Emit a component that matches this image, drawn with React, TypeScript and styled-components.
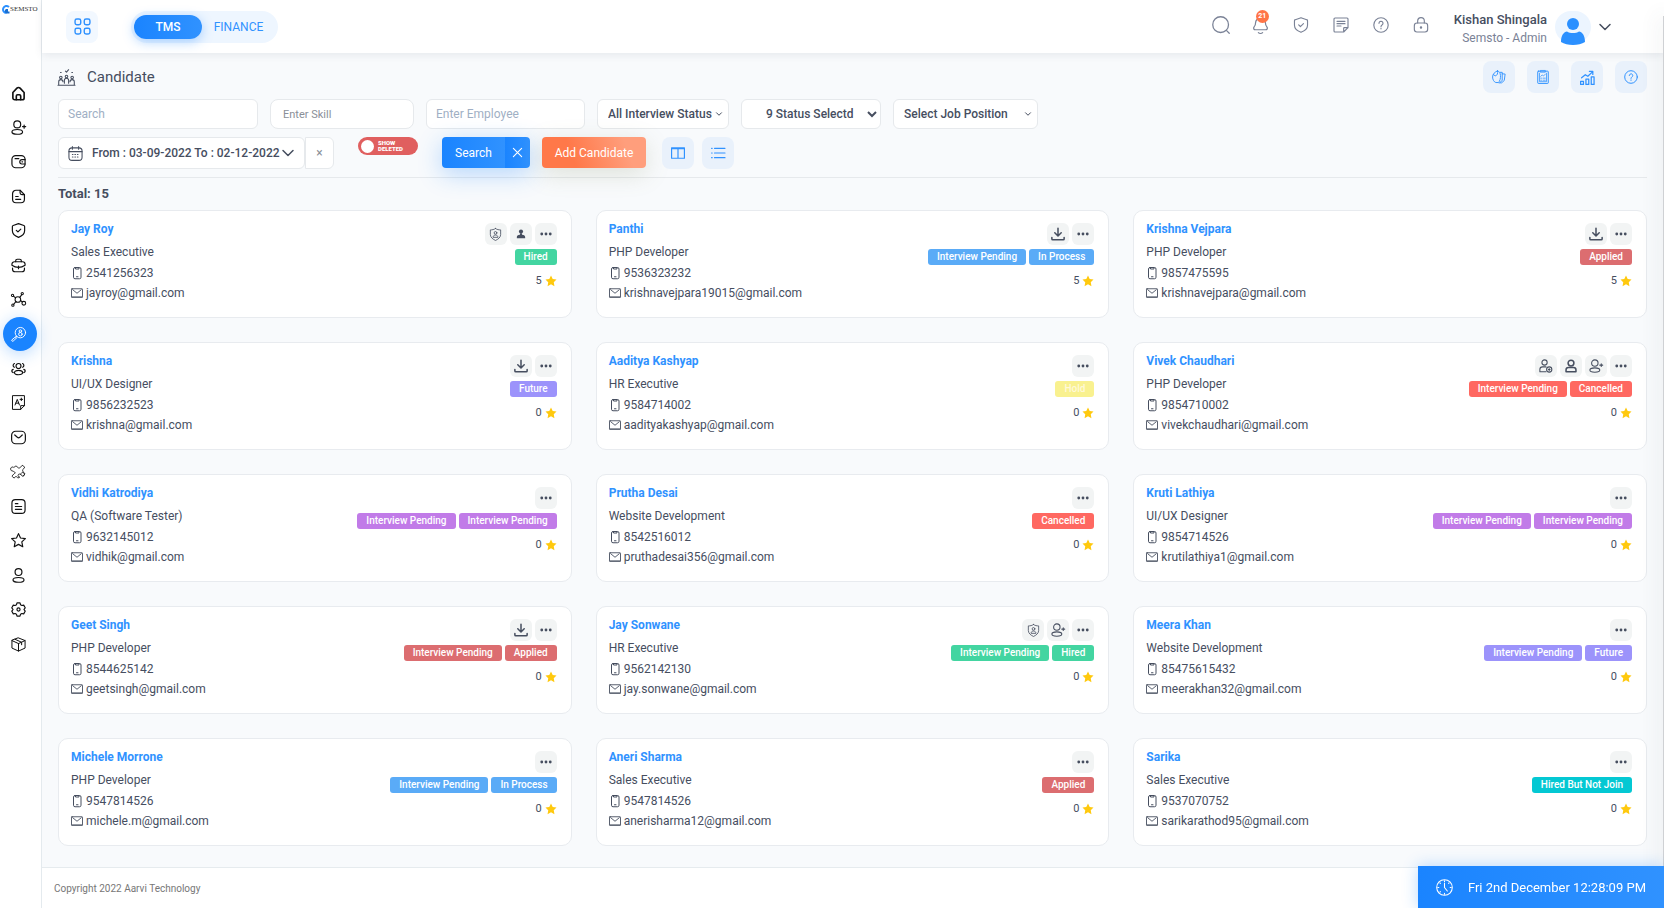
import React from "react";
import styled, { createGlobalStyle } from "styled-components";

const GlobalStyle = createGlobalStyle`
  *, *::before, *::after { box-sizing: border-box; }
  body {
    margin: 0;
    background: #f8fafc;
    color: #464e5f;
    font-family: Roboto, "Liberation Sans", sans-serif;
    font-size: 12px;
  }
  button, input, select { font-family: inherit; margin: 0; }
  button { cursor: pointer; }
  h1, h2, p, ul, dl, dd { margin: 0; padding: 0; }
  svg { display: block; flex: none; }
`;

/* ---------- icons ---------- */

const shapes: Record<string, React.ReactNode> = {
  home: (
    <>
      <path d="M3 10.5 9.5 3.4a3.4 3.4 0 0 1 5 0L21 10.5V19a3 3 0 0 1-3 3H6a3 3 0 0 1-3-3z" />
      <path d="M8.500 22v-6a2 2 0 0 1 2-2h3a2 2 0 0 1 2 2v6" />
    </>
  ),
  userPlus: (
    <>
      <circle cx="10" cy="7" r="5.500" />
      <ellipse cx="10" cy="19" rx="8.500" ry="3.800" />
      <path d="M21 8v5M18.500 10.500h5" />
    </>
  ),
  wallet: (
    <>
      <rect x="1.500" y="2.500" width="21" height="19.500" rx="6" />
      <path d="M22.500 9h-5a3.500 3.500 0 0 0 0 7h5M17.500 12.500h1M6.500 7.500h6" />
    </>
  ),
  file: (
    <>
      <path d="M14.500 2H8a5.500 5.500 0 0 0-5.500 5.500v9A5.500 5.500 0 0 0 8 22h8a5.500 5.500 0 0 0 5.500-5.500V9z" />
      <path d="M14.500 2v4a3 3 0 0 0 3 3h4M7.500 12h4M7.500 16.500h8" />
    </>
  ),
  shieldCheck: (
    <>
      <path d="M12 1 20.500 4a1.800 1.800 0 0 1 1.300 1.700v6.800c0 5-4.300 8.500-9.800 10.500-5.500-2-9.800-5.500-9.800-10.500V5.700A1.800 1.800 0 0 1 3.500 4z" />
      <path d="m8.500 11.800 2.600 2.500 4.600-4.500" />
    </>
  ),
  briefcase: (
    <>
      <path d="M7.500 6V4.500A2.500 2.500 0 0 1 10 2h4a2.500 2.500 0 0 1 2.500 2.500V6" />
      <path d="M1.500 11.500V10A4 4 0 0 1 5.500 6h13a4 4 0 0 1 4 4v1.500C19 14 15.500 15 12 15S5 14 1.500 11.500zM2.500 16v2.500a4 4 0 0 0 4 3.500h11a4 4 0 0 0 4-3.500V16M12 13v4" />
    </>
  ),
  network: (
    <>
      <circle cx="11" cy="12" r="4.500" />
      <circle cx="2.500" cy="5.500" r="1.800" />
      <circle cx="18" cy="2.500" r="1.800" />
      <circle cx="3" cy="21" r="1.800" />
      <circle cx="20.500" cy="18" r="3" />
      <path d="m4 6.500 3.300 3M17 4.500l-3 4M4.500 19.500l3.300-4M15.300 13.500l2.700 2.500" />
    </>
  ),
  candidateSearch: (
    <>
      <circle cx="15" cy="9" r="8.300" />
      <circle cx="15" cy="6.500" r="2" />
      <circle cx="15" cy="11.500" r="2.800" />
      <path d="M9 15l-1.500 1.700M7.500 15.500 1.500 20.500c-1 1.500.5 3 2 2l6-5.500" />
    </>
  ),
  users: (
    <>
      <circle cx="12" cy="8" r="4" />
      <ellipse cx="12" cy="18.500" rx="6.500" ry="3.500" />
      <path d="M5.500 4a3.200 3.200 0 0 0 0 6M18.500 4a3.200 3.200 0 0 1 0 6M3.500 13.500c-3 1-3 4 0 5M20.500 13.500c3 1 3 4 0 5" />
    </>
  ),
  grade: (
    <>
      <path d="M3 1h18.500v16L15.500 23H3z" />
      <path d="M21.500 17h-6v6M6.500 16 10 7l3.500 9M7.800 13h4.500M16.500 5v4M14.500 7h4" />
    </>
  ),
  mailRound: (
    <>
      <rect x="1" y="2" width="22" height="20" rx="6.500" />
      <path d="m6 8 4.200 3.700a3 3 0 0 0 3.800 0L18 8" />
    </>
  ),
  puzzle: (
    <path
      strokeDasharray="2.500 1"
      d="M4.500 5.500 8 3l3 2.500a2.500 2.500 0 0 0 4 0L18 2l4 3-2.500 3.500a2.500 2.500 0 0 0 0 4L22.500 16 19 19.500l-3-2a2.500 2.500 0 1 0-2 3.500l-3 1.500-3-3-3 3-3.500-3 3-3.500 2.500-2-3.500-2.500-3-1A2.500 2.500 0 1 1 4.500 5.500zM15.500 16.500a3 3 0 1 1 4 3"
    />
  ),
  note: (
    <>
      <rect x="1.500" y="1" width="21" height="22" rx="5.500" />
      <path d="M7 7.500h4M7 12h10M7 16.500h10" />
    </>
  ),
  star: <path d="m12 1 3.200 7 7.800 1-5.700 5.300 1.500 7.700-6.800-3.800L5.200 22l1.500-7.700L1 9l7.800-1z" />,
  user: (
    <>
      <circle cx="12" cy="6.500" r="5.500" />
      <ellipse cx="12" cy="19" rx="8.800" ry="3.800" />
    </>
  ),
  gear: (
    <>
      <path d="M9.600 1.500h4.800l.9 3 2 1.100 3-.6 2.400 4.300-2 2.700 2 2.700-2.400 4.300-3-.6-2 1.100-.9 3H9.600l-.9-3-2-1.100-3 .6-2.400-4.300 2-2.700-2-2.700L3.700 5l3 .6 2-1.100z" />
      <circle cx="12" cy="12" r="2.500" />
    </>
  ),
  box: (
    <>
      <path d="m12 1.500 10.500 4.200v12L12 22.500 1.500 17.700v-12zM1.500 5.700 12 10.500l10.500-4.800M12 10.500v12" />
      <path d="m6.500 3.700 10.500 4.700v4" />
    </>
  ),
  grid: (
    <>
      <rect x="1.500" y="1.500" width="8" height="8" rx="2.500" />
      <rect x="14.500" y="1.500" width="8" height="8" rx="2.500" />
      <rect x="1.500" y="14.500" width="8" height="8" rx="2.500" />
      <rect x="14.500" y="14.500" width="8" height="8" rx="2.500" />
    </>
  ),
  search: (
    <>
      <circle cx="11.500" cy="11.500" r="10.500" />
      <path d="m19.500 19.500 3.500 3.500" />
    </>
  ),
  bell: (
    <path d="M5 8.500a7 7 0 0 1 14 0c0 3 .5 4 2 5.500 1.500 2 .5 4-2 4H5c-2.500 0-3.500-2-2-4 1.500-1.500 2-2.500 2-5.500zM9 22c1.500 1.700 4.500 1.700 6 0" />
  ),
  memo: (
    <>
      <path d="M3 1.500h18a1.500 1.500 0 0 1 1.500 1.500v13L16 22.500H3A1.500 1.500 0 0 1 1.500 21V3A1.500 1.500 0 0 1 3 1.500zM22.500 16H17a1 1 0 0 0-1 1v5.500" />
      <path d="M6 6.500h12M6 10h12M6 13.500h6" />
    </>
  ),
  help: (
    <>
      <circle cx="12" cy="12" r="10.800" />
      <path d="M9 9.500a3 3 0 1 1 4.500 2.600c-1 .6-1.500 1.100-1.500 2.400M12 17v.8" />
    </>
  ),
  lock: (
    <>
      <rect x="2" y="9" width="20" height="13.500" rx="4" />
      <path d="M7 9V6a5 5 0 0 1 10 0v3" />
      <circle cx="12" cy="15.800" r="1" />
    </>
  ),
  team: (
    <>
      <path d="M1 22v-4a3 3 0 0 1 6 0M9 20v-4a3 3 0 0 1 6 0v4M17 18a3 3 0 0 1 6 0v4M0 23h24" />
      <circle cx="4" cy="12" r="1.800" />
      <circle cx="12" cy="10.500" r="1.800" />
      <circle cx="20" cy="12" r="1.800" />
      <path d="m10.500 3 1.500 1.500L15 1M3.500 5h1M19.500 5h1" />
    </>
  ),
  cards: (
    <>
      <path d="M9.500 1.500C5 3 1 7 1 12c0 4.500 2.500 8.500 5.500 9.500H11c2.500-2 4-8 3.500-12-.3-4-1.500-7.500-5-8z" />
      <path d="M9.500 1.500C10.500 6 9 9.500 5.500 10L2.500 8M14 4h3.500v14L14 21M17.500 6.500l5 .5-1.500 11-4.500 4H12" />
    </>
  ),
  clipboard: (
    <>
      <rect x="3" y="2" width="18" height="21" rx="1" />
      <path strokeWidth="1.300" d="M8 .8h8v3H8zM6 5.500V20h12V5.500M8 11l2.500-2.500 2 1.500L16 7.500M8 14h1.500M12 14h4M8 17.500h1.500M12 17.500h4" />
    </>
  ),
  growth: (
    <path d="M1 18h4.500v5H1zM9.500 14.500H14V23H9.500zM18 11h4.500v12H18zM2.500 12.500l6-5 4 2.500L20 3M15 2h5.500v5" />
  ),
  columns: <path d="M1 3h22v18H1zM12 3v18M1 4.500h22" />,
  list: <path d="M1 4h1M6 4h18M1 12h1M6 12h18M1 20h1M6 20h18" />,
  calendar: (
    <>
      <rect x="1.500" y="3" width="21" height="20" rx="5" />
      <path d="M7 1v4M17 1v4M1.500 9h21" />
      <path strokeDasharray="1 3" d="M7 13.500h11M7 17.500h11" />
    </>
  ),
  chevron: <path d="m2 7 10 10L22 7" />,
  cross: <path d="m3 3 18 18M21 3 3 21" />,
  phone: (
    <>
      <rect x="5" y="1" width="15" height="22.500" rx="3" />
      <path d="M9 2v2h7V2M11 19.500h3" />
    </>
  ),
  mail: (
    <>
      <rect x="1" y="3.500" width="22" height="17" rx="1" />
      <path d="m3.500 5.500 8.500 7 8.500-7M1 20h22" />
    </>
  ),
  shieldUser: (
    <>
      <path d="M12 1c3 2 6 2.500 9.500 2.500V12c0 5-4 8.500-9.500 11-5.500-2.500-9.500-6-9.500-11V3.500C6 3.500 9 3 12 1z" />
      <circle cx="12" cy="9" r="2.500" />
      <path d="M7.500 16.500c0-5 9-5 9 0z" />
    </>
  ),
  userLine: (
    <>
      <circle cx="12" cy="7" r="5" />
      <path d="M3.500 22v-3.500c0-3 2-4 4-4h9c2 0 4 1 4 4V22z" />
    </>
  ),
  userGear: (
    <>
      <circle cx="9.500" cy="6" r="4.500" />
      <path d="M12 22H1.500v-4c0-3 2-4.500 4.500-4.500h6" />
      <circle cx="17.500" cy="18" r="4.500" />
      <path d="M16 18h3M17.500 16.500v3" />
    </>
  ),
  download: <path d="M12 2v13M6.500 10l5.500 5.500 5.500-5.500M1.500 18v2.500a1.500 1.500 0 0 0 1.500 1.500h18a1.500 1.500 0 0 0 1.500-1.500V18" />,
  clock: (
    <>
      <circle cx="12" cy="12" r="11" />
      <path d="M12 6v6l4 5M12 2.500v1.500M12 20v1.500M2.500 12H4M20 12h1.500M5.500 5.500l.7.7M18.500 5.500l-.7.7M5.500 18.500l.7-.7" />
    </>
  ),
};

const filled: Record<string, React.ReactNode> = {
  userSolid: (
    <>
      <circle cx="12" cy="6" r="5" />
      <path d="M9.500 10h5v4c5.500.5 7.500 2.500 7.500 6v2H2v-2c0-3.500 2-5.500 7.500-6z" />
    </>
  ),
  dots: (
    <>
      <circle cx="3.500" cy="12" r="2.800" />
      <circle cx="12" cy="12" r="2.800" />
      <circle cx="20.500" cy="12" r="2.800" />
    </>
  ),
  starSolid: <path d="m12 1 3.400 7.200 7.600 1-5.500 5.300 1.400 7.800L12 18.500l-6.900 3.800 1.400-7.800L1 9.200l7.600-1z" />,
  avatar: (
    <>
      <circle cx="12" cy="5" r="6" />
      <path d="M0 23c0-7 3-10 6-10.500 3 2 9 2 12 0 3 .5 6 3.500 6 10.500-6 4-18 4-24 0z" />
    </>
  ),
};

function Icon({ name, size = 16, weight = 2 }: { name: string; size?: number; weight?: number }) {
  const solid = name in filled;
  return (
    <svg
      width={size}
      height={size}
      viewBox="0 0 24 24"
      overflow="visible"
      fill={solid ? "currentColor" : "none"}
      stroke={solid ? "none" : "currentColor"}
      strokeWidth={weight}
      strokeLinecap="round"
      strokeLinejoin="round"
      aria-hidden="true"
    >
      {solid ? filled[name] : shapes[name]}
    </svg>
  );
}

/* ---------- shell ---------- */

const Shell = styled.div`
  display: flex;
  min-height: 100vh;
`;

const Sidebar = styled.aside`
  flex: none;
  width: 42px;
  background: #fff;
  border-right: 1px solid #e4eaee;
`;

const Logo = styled.a`
  display: flex;
  align-items: center;
  height: 16px;
  padding: 2px 0 0 2px;
  margin-bottom: 60px;
  color: #333;
  font-family: "Liberation Serif", serif;
  font-size: 7px;
  line-height: 10px;
  text-decoration: none;
`;

const SideNav = styled.nav`
  display: flex;
  flex-direction: column;
  justify-content: space-between;
  height: 585px;
  padding-left: 3px;
`;

const SideLink = styled.a<{ $active?: boolean }>`
  display: flex;
  align-items: center;
  width: 34px;
  height: 34px;
  padding-left: 8px;
  border-radius: 50%;
  color: ${(p) => (p.$active ? "#fff" : "#111")};
  background: ${(p) => (p.$active ? "#1a84ff" : "transparent")};
  box-shadow: ${(p) => (p.$active ? "0 3px 16px rgba(26, 132, 255, 0.3)" : "none")};
`;

const Page = styled.div`
  display: flex;
  flex: 1;
  flex-direction: column;
  min-width: 0;
`;

const Header = styled.header`
  display: flex;
  align-items: center;
  height: 53px;
  padding: 0 53px 0 24px;
  background: #fff;
  box-shadow: 0 2px 8px rgba(70, 78, 95, 0.1);
`;

const SquareButton = styled.button<{ $tone?: string }>`
  display: flex;
  align-items: center;
  justify-content: center;
  width: 32px;
  height: 32px;
  padding: 0;
  border: 0;
  border-radius: 8px;
  background: ${(p) => p.$tone ?? "#e9f1fb"};
  color: #3092ff;
`;

const ModeSwitch = styled.div`
  display: flex;
  align-items: center;
  height: 32px;
  margin-left: 33px;
  padding: 0 3px;
  border-radius: 16px;
  background: #eef6ff;
`;

const ModeButton = styled.button<{ $active?: boolean }>`
  height: 24px;
  width: ${(p) => (p.$active ? "68px" : "73px")};
  padding: 0;
  border: 0;
  border-radius: 12px;
  font-size: 12px;
  font-weight: ${(p) => (p.$active ? 500 : 400)};
  color: ${(p) => (p.$active ? "#fff" : "#3092ff")};
  background: ${(p) => (p.$active ? "linear-gradient(90deg, #1a84ff, #3092ff)" : "transparent")};
  box-shadow: ${(p) => (p.$active ? "0 3px 12px rgba(26, 132, 255, 0.35)" : "none")};
`;

const HeaderTools = styled.div`
  display: flex;
  gap: 22px;
  margin-left: auto;
  padding-bottom: 3px;
`;

const ToolButton = styled.button`
  position: relative;
  display: flex;
  align-items: center;
  justify-content: center;
  width: 18px;
  height: 18px;
  padding: 0;
  border: 0;
  background: none;
  color: #7a8296;
`;

const Badge = styled.span`
  position: absolute;
  top: -6px;
  left: 4px;
  width: 13px;
  height: 13px;
  border-radius: 50%;
  background: #ff7547;
  color: #fff;
  font-size: 7px;
  font-weight: 700;
  line-height: 13px;
`;

const Account = styled.button`
  display: flex;
  align-items: center;
  margin-left: 24px;
  padding: 0;
  border: 0;
  background: none;
  color: #464e5f;
  text-align: right;
`;

const AccountText = styled.span`
  display: flex;
  flex-direction: column;
  padding-top: 4px;
  font-size: 12px;
  line-height: 19px;
  color: #7a8296;
`;

const AccountName = styled.strong`
  font-size: 13px;
  font-weight: 500;
  color: #464e5f;
`;

const Avatar = styled.span`
  display: flex;
  align-items: flex-end;
  justify-content: center;
  width: 36px;
  height: 32px;
  margin: 0 8px;
  border-radius: 18px;
  background: #ecf5ff;
  color: #2b90ff;
`;

/* ---------- filters ---------- */

const Main = styled.main`
  flex: 1;
  padding: 8px 17px 21px 16px;
`;

const TitleBar = styled.div`
  display: flex;
  align-items: center;
  gap: 12px;
  height: 32px;
  margin-bottom: 6px;
`;

const Title = styled.h1`
  margin-right: auto;
  font-size: 15px;
  font-weight: 400;
`;

const Filters = styled.form`
  padding-bottom: 8px;
  border-bottom: 1px solid #e6e9ec;
`;

const FilterRow = styled.div`
  display: flex;
  flex-wrap: wrap;
  gap: 12px;
  & + & { margin-top: 8px; gap: 0; }
`;

const Field = styled.input<{ $width: number; $soft?: boolean }>`
  width: ${(p) => p.$width}px;
  height: 30px;
  padding: ${(p) => (p.$soft ? "0 12px" : "0 9px")};
  border: 1px solid #e6e9ec;
  border-radius: ${(p) => (p.$soft ? 8 : 6)}px;
  background: #fff;
  font-size: ${(p) => (p.$soft ? 11 : 12)}px;
  &::placeholder { color: ${(p) => (p.$soft ? "#8a8f98" : "#9fafc4")}; opacity: 1; }
`;

const PickerBox = styled.span<{ $width: number }>`
  display: grid;
  grid-template-columns: 1fr 12px;
  align-items: center;
  width: ${(p) => p.$width}px;
  height: 30px;
  border: 1px solid #e6e9ec;
  border-radius: 6px;
  background: #fff;
  color: #464e5f;
`;

const PlainPicker = styled.select`
  appearance: none;
  grid-area: 1 / 1 / 2 / 3;
  height: 28px;
  padding: 0 12px 0 10px;
  border: 0;
  background: none;
  color: #464e5f;
  font-size: 12px;
  font-weight: 500;
`;

const PickerMark = styled.span`
  grid-area: 1 / 2 / 2 / 3;
  pointer-events: none;
`;

const StatusPicker = styled.select`
  width: 140px;
  height: 30px;
  padding: 0 0 0 20px;
  border: 1px solid #e6e9ec;
  border-radius: 6px;
  background: #fff;
  color: #464e5f;
  font-size: 12px;
  font-weight: 500;
`;

const DateButton = styled.button`
  display: flex;
  align-items: center;
  width: 247px;
  height: 32px;
  padding: 0 10px 0 9px;
  border: 1px solid #e6e9ec;
  border-radius: 6px;
  background: #fff;
  color: #464e5f;
  font-size: 12px;
  font-weight: 500;
`;

const DateText = styled.span`
  margin: 0 auto 0 9px;
`;

const ClearDate = styled.button`
  width: 29px;
  height: 32px;
  padding: 0;
  border: 1px solid #e6e9ec;
  border-radius: 0 6px 6px 0;
  background: #fff;
  color: #8a8f98;
  font-size: 12px;
`;

const DeletedToggle = styled.label`
  display: flex;
  align-items: center;
  gap: 4px;
  width: 60px;
  height: 18px;
  margin: 0 24px;
  padding-left: 3px;
  border-radius: 9px;
  background: #e05f5f;
  color: #fff;
  font-size: 6px;
  font-weight: 900;
  line-height: 6px;
  cursor: pointer;
`;

const ToggleInput = styled.input`
  appearance: none;
  flex: none;
  width: 13px;
  height: 13px;
  border-radius: 50%;
  background: #fff;
`;

const SearchGroup = styled.div`
  display: flex;
  height: 31px;
  margin-right: 12px;
  border-radius: 4px;
  box-shadow: 0 6px 24px rgba(26, 132, 255, 0.3);
`;

const SearchButton = styled.button`
  width: 63px;
  padding: 0;
  border: 0;
  border-radius: 4px 0 0 4px;
  background: linear-gradient(90deg, #1a84ff, #3092ff);
  color: #fff;
  font-size: 12px;
`;

const ResetButton = styled.button`
  display: flex;
  align-items: center;
  justify-content: center;
  width: 25px;
  padding: 0;
  border: 0;
  border-radius: 0 4px 4px 0;
  background: linear-gradient(90deg, #1a84ff, #3092ff);
  color: #fff;
`;

const AddButton = styled.button`
  width: 104px;
  height: 31px;
  margin-right: 16px;
  padding: 0;
  border: 0;
  border-radius: 4px;
  background: linear-gradient(70deg, #ff7849 30%, #ff9e7c 80%);
  box-shadow: 0 6px 24px rgba(120, 130, 80, 0.2);
  color: #fff;
  font-size: 12px;
`;

const ViewButtons = styled.div`
  display: flex;
  gap: 8px;
`;

/* ---------- candidate cards ---------- */

const Total = styled.p`
  margin: 7px 0;
  font-size: 13px;
  font-weight: 700;
  line-height: 18px;
`;

const Cards = styled.div`
  display: grid;
  grid-template-columns: repeat(3, minmax(0, 1fr));
  gap: 24px;
`;

const Card = styled.article`
  display: flex;
  justify-content: space-between;
  min-height: 108px;
  padding: 9px 14px 8px 12px;
  border: 1px solid #e8ebef;
  border-radius: 10px;
  background: #fff;
`;

const Details = styled.div`
  min-width: 0;
  line-height: 20px;
`;

const Name = styled.a`
  display: block;
  margin-bottom: 4px;
  line-height: 18px;
  font-weight: 700;
  color: #3092ff;
  text-decoration: none;
`;

const Role = styled.p`
  margin-bottom: 1px;
`;

const Contact = styled.p`
  display: flex;
  align-items: center;
  gap: 3px;
`;

const Side = styled.div`
  display: flex;
  flex-direction: column;
  align-items: flex-end;
  padding-top: 3px;
`;

const Row = styled.div`
  display: flex;
  gap: 3px;
`;

const Action = styled.button`
  display: flex;
  align-items: center;
  justify-content: center;
  width: 22px;
  height: 22px;
  padding: 0;
  border: 0;
  border-radius: 6px;
  background: #f2f4f4;
  color: #464e5f;
`;

const Tags = styled(Row)`
  margin: 4px 0 8px;
`;

const Tag = styled.span<{ $color: string; $ink?: string }>`
  padding: 0 9px;
  border-radius: 3px;
  background: ${(p) => p.$color};
  color: ${(p) => p.$ink ?? "#fff"};
  font-size: 10px;
  font-weight: 500;
  line-height: 16px;
  white-space: nowrap;
`;

const Rating = styled.div`
  display: flex;
  align-items: center;
  gap: 3px;
  font-size: 11px;
  line-height: 16px;
`;

const StarMark = styled.span`
  color: #ffc90e;
`;

/* ---------- footer ---------- */

const Footer = styled.footer`
  display: flex;
  align-items: center;
  justify-content: space-between;
  height: 41px;
  padding-left: 12px;
  border-top: 1px solid #e6ebee;
  background: #fff;
  color: #777;
  font-size: 10px;
`;

const ClockBar = styled.div`
  position: relative;
  z-index: 2;
  display: flex;
  align-items: center;
  gap: 15px;
  height: 42px;
  margin-top: -2px;
  padding: 0 18px;
  background: linear-gradient(90deg, #1a84ff, #3092ff);
  box-shadow: 0 0 16px rgba(26, 132, 255, 0.3);
  color: #fff;
  font-size: 13px;
`;

const EdgePanel = styled.div`
  position: fixed;
  z-index: 1;
  top: 16px;
  right: 0;
  bottom: 28px;
  width: 1px;
  background: #cfd1d4;
  box-shadow: 0 0 20px 2px rgba(70, 78, 95, 0.16);
`;

/* ---------- data ---------- */

const sideItems: [string, string, number?][] = [
  ["home", "Home", 2.6],
  ["userPlus", "Add user"],
  ["wallet", "Wallet"],
  ["file", "Documents"],
  ["shieldCheck", "Security"],
  ["briefcase", "Jobs"],
  ["network", "Network", 1.7],
  ["candidateSearch", "Candidates", 1.5],
  ["users", "Teams"],
  ["grade", "Grades", 1.6],
  ["mailRound", "Mail"],
  ["puzzle", "Extensions", 1.3],
  ["note", "Notes"],
  ["star", "Favourites"],
  ["user", "Profile"],
  ["gear", "Settings"],
  ["box", "Assets", 1.6],
];

const tools: [string, string, number][] = [
  ["search", "Search", 18],
  ["bell", "Notifications", 17],
  ["shieldCheck", "Security", 16],
  ["memo", "Notes", 16],
  ["help", "Help", 16],
  ["lock", "Lock", 16],
];

const BLUE = "#5aabf7";
const RED = "#dc6d70";
const CORAL = "#ff6861";
const GREEN = "#43d5a1";
const LILAC = "#9c93fb";
const PURPLE = "#c17be8";
const CYAN = "#04c8d3";
const YELLOW = "#f9f18f";

interface Candidate {
  name: string;
  role: string;
  phone: string;
  email: string;
  actions?: string[];
  tags: string[];
  color: string;
  rating?: number;
}

const candidates: Candidate[] = [
  { name: "Jay Roy", role: "Sales Executive", phone: "2541256323", email: "jayroy@gmail.com", actions: ["shieldUser", "userSolid"], tags: ["Hired"], color: GREEN, rating: 5 },
  { name: "Panthi", role: "PHP Developer", phone: "9536323232", email: "krishnavejpara19015@gmail.com", actions: ["download"], tags: ["Interview Pending", "In Process"], color: BLUE, rating: 5 },
  { name: "Krishna Vejpara", role: "PHP Developer", phone: "9857475595", email: "krishnavejpara@gmail.com", actions: ["download"], tags: ["Applied"], color: RED, rating: 5 },
  { name: "Krishna", role: "UI/UX Designer", phone: "9856232523", email: "krishna@gmail.com", actions: ["download"], tags: ["Future"], color: LILAC },
  { name: "Aaditya Kashyap", role: "HR Executive", phone: "9584714002", email: "aadityakashyap@gmail.com", tags: ["Hold"], color: YELLOW },
  { name: "Vivek Chaudhari", role: "PHP Developer", phone: "9854710002", email: "vivekchaudhari@gmail.com", actions: ["userGear", "userLine", "userPlus"], tags: ["Interview Pending", "Cancelled"], color: CORAL },
  { name: "Vidhi Katrodiya", role: "QA (Software Tester)", phone: "9632145012", email: "vidhik@gmail.com", tags: ["Interview Pending", "Interview Pending"], color: PURPLE },
  { name: "Prutha Desai", role: "Website Development", phone: "8542516012", email: "pruthadesai356@gmail.com", tags: ["Cancelled"], color: CORAL },
  { name: "Kruti Lathiya", role: "UI/UX Designer", phone: "9854714526", email: "krutilathiya1@gmail.com", tags: ["Interview Pending", "Interview Pending"], color: PURPLE },
  { name: "Geet Singh", role: "PHP Developer", phone: "8544625142", email: "geetsingh@gmail.com", actions: ["download"], tags: ["Interview Pending", "Applied"], color: RED },
  { name: "Jay Sonwane", role: "HR Executive", phone: "9562142130", email: "jay.sonwane@gmail.com", actions: ["shieldUser", "userPlus"], tags: ["Interview Pending", "Hired"], color: GREEN },
  { name: "Meera Khan", role: "Website Development", phone: "85475615432", email: "meerakhan32@gmail.com", tags: ["Interview Pending", "Future"], color: LILAC },
  { name: "Michele Morrone", role: "PHP Developer", phone: "9547814526", email: "michele.m@gmail.com", tags: ["Interview Pending", "In Process"], color: BLUE },
  { name: "Aneri Sharma", role: "Sales Executive", phone: "9547814526", email: "anerisharma12@gmail.com", tags: ["Applied"], color: RED },
  { name: "Sarika", role: "Sales Executive", phone: "9537070752", email: "sarikarathod95@gmail.com", tags: ["Hired But Not Join"], color: CYAN },
];

const actionSize: Record<string, number> = { download: 14, userSolid: 10, shieldUser: 13, userPlus: 14, userGear: 14, userLine: 14 };
const actionWeight: Record<string, number> = { download: 2.6, shieldUser: 1.5, userLine: 2.6 };

function CandidateCard({ person }: { person: Candidate }) {
  return (
    <Card>
      <Details>
        <Name href="#">{person.name}</Name>
        <Role>{person.role}</Role>
        <Contact><Icon name="phone" size={12} />{person.phone}</Contact>
        <Contact><Icon name="mail" size={12} weight={1.8} />{person.email}</Contact>
      </Details>
      <Side>
        <Row>
          {(person.actions ?? []).map((a) => (
            <Action key={a} aria-label={a}>
              <Icon name={a} size={actionSize[a]} weight={actionWeight[a] ?? 1.8} />
            </Action>
          ))}
          <Action aria-label="More"><Icon name="dots" size={12} /></Action>
        </Row>
        <Tags>
          {person.tags.map((t, i) => (
            <Tag key={i} $color={person.color} $ink={person.color === YELLOW ? "#fff9d8" : undefined}>{t}</Tag>
          ))}
        </Tags>
        <Rating>
          {person.rating ?? 0}
          <StarMark><Icon name="starSolid" size={12} /></StarMark>
        </Rating>
      </Side>
    </Card>
  );
}

function Picker({ width, label, value }: { width: number; label: string; value: string }) {
  return (
    <PickerBox $width={width}>
      <PlainPicker aria-label={label}><option>{value}</option></PlainPicker>
      <PickerMark><Icon name="chevron" size={6} weight={4} /></PickerMark>
    </PickerBox>
  );
}

export default function App() {
  return (
    <>
      <GlobalStyle />
      <Shell>
        <Sidebar>
          <Logo href="#" aria-label="Semsto">
            <svg width="8" height="9" viewBox="0 0 16 18">
              <path d="M14 4A7 7 0 1 0 9 16" fill="none" stroke="#2b90ff" strokeWidth="4" />
              <path d="M8 8h4v5h3v4H9a5 5 0 0 1-1-9z" fill="#1a6fd0" />
            </svg>
            SEMSTO
          </Logo>
          <SideNav>
            {sideItems.map(([icon, label, weight]) => (
              <SideLink key={icon} href="#" aria-label={label} $active={icon === "candidateSearch"}>
                <Icon name={icon} size={15} weight={weight ?? 1.9} />
              </SideLink>
            ))}
          </SideNav>
        </Sidebar>

        <Page>
          <Header>
            <SquareButton $tone="#f2f8ff" aria-label="Apps"><Icon name="grid" size={17} /></SquareButton>
            <ModeSwitch>
              <ModeButton $active>TMS</ModeButton>
              <ModeButton>FINANCE</ModeButton>
            </ModeSwitch>
            <HeaderTools>
              {tools.map(([icon, label, size]) => (
                <ToolButton key={icon} aria-label={label}>
                  <Icon name={icon} size={size} weight={1.7} />
                  {icon === "bell" && <Badge>21</Badge>}
                </ToolButton>
              ))}
            </HeaderTools>
            <Account>
              <AccountText>
                <AccountName>Kishan Shingala</AccountName>
                Semsto - Admin
              </AccountText>
              <Avatar><Icon name="avatar" size={24} /></Avatar>
              <Icon name="chevron" size={12} weight={3} />
            </Account>
          </Header>

          <Main>
            <TitleBar>
              <Icon name="team" size={17} weight={1.5} />
              <Title>Candidate</Title>
              <SquareButton aria-label="Cards"><Icon name="cards" size={14} weight={1.6} /></SquareButton>
              <SquareButton aria-label="Report"><Icon name="clipboard" size={14} weight={1.7} /></SquareButton>
              <SquareButton aria-label="Statistics"><Icon name="growth" size={15} /></SquareButton>
              <SquareButton aria-label="Help"><Icon name="help" size={14} weight={1.7} /></SquareButton>
            </TitleBar>

            <Filters onSubmit={(e) => e.preventDefault()}>
              <FilterRow>
                <Field $width={200} placeholder="Search" aria-label="Search" />
                <Field $width={144} $soft placeholder="Enter Skill" aria-label="Skill" />
                <Field $width={159} placeholder="Enter Employee" aria-label="Employee" />
                <Picker width={132} label="Interview status" value="All Interview Status" />
                <StatusPicker aria-label="Status"><option>9 Status Selectd</option></StatusPicker>
                <Picker width={145} label="Job position" value="Select Job Position" />
              </FilterRow>
              <FilterRow>
                <DateButton type="button">
                  <Icon name="calendar" size={15} weight={1.7} />
                  <DateText>From : 03-09-2022 To : 02-12-2022</DateText>
                  <Icon name="chevron" size={12} weight={3} />
                </DateButton>
                <ClearDate type="button" aria-label="Clear dates">×</ClearDate>
                <DeletedToggle>
                  <ToggleInput type="checkbox" />
                  <span>SHOW<br />DELETED</span>
                </DeletedToggle>
                <SearchGroup>
                  <SearchButton type="submit">Search</SearchButton>
                  <ResetButton type="reset" aria-label="Reset"><Icon name="cross" size={11} weight={2.4} /></ResetButton>
                </SearchGroup>
                <AddButton type="button">Add Candidate</AddButton>
                <ViewButtons>
                  <SquareButton type="button" aria-label="Board view"><Icon name="columns" size={14} /></SquareButton>
                  <SquareButton type="button" aria-label="List view"><Icon name="list" size={14} /></SquareButton>
                </ViewButtons>
              </FilterRow>
            </Filters>

            <Total>Total: 15</Total>
            <Cards>
              {candidates.map((person) => (
                <CandidateCard key={person.email} person={person} />
              ))}
            </Cards>
          </Main>

          <Footer>
            <span>Copyright 2022 Aarvi Technology</span>
            <ClockBar>
              <Icon name="clock" size={17} weight={1.5} />
              <span>Fri 2nd December 12:28:09 PM</span>
            </ClockBar>
          </Footer>
        </Page>
      </Shell>
      <EdgePanel />
    </>
  );
}
